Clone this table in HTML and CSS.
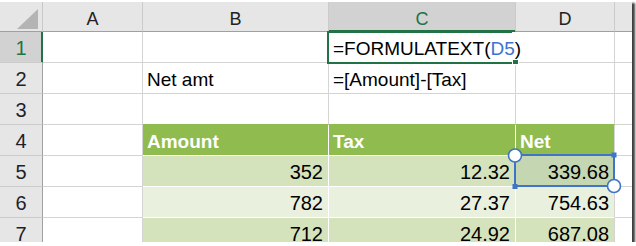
FILE: index.html
```html
<!DOCTYPE html>
<html>
<head>
<meta charset="utf-8">
<link rel="stylesheet" href="styles.css">
</head>
<body>
<div class="frame">
  <div class="sheet">
    <div class="c corner"><svg class="tri" width="24" height="22" viewBox="0 0 24 22"><polygon points="22,1 22,21 1,21" fill="#b4b4b4"/></svg></div>
    <div class="c colh">A</div>
    <div class="c colh">B</div>
    <div class="c colh sel">C</div>
    <div class="c colh">D</div>
    <div class="c colh last"></div>

    <div class="c rowh sel">1</div>
    <div class="c"></div>
    <div class="c"></div>
    <div class="c active"><span class="txt">=FORMULATEXT(<span class="ref">D5</span>)</span></div>
    <div class="c"></div>
    <div class="c last"></div>

    <div class="c rowh">2</div>
    <div class="c"></div>
    <div class="c">Net amt</div>
    <div class="c">=[Amount]-[Tax]</div>
    <div class="c"></div>
    <div class="c last"></div>

    <div class="c rowh">3</div>
    <div class="c"></div>
    <div class="c pre"></div>
    <div class="c pre"></div>
    <div class="c pre"></div>
    <div class="c last"></div>

    <div class="c rowh">4</div>
    <div class="c"></div>
    <div class="c th">Amount</div>
    <div class="c th">Tax</div>
    <div class="c th end">Net</div>
    <div class="c last"></div>

    <div class="c rowh">5</div>
    <div class="c"></div>
    <div class="c num b1">352</div>
    <div class="c num b1">12.32</div>
    <div class="c num b1 end picked">339.68<svg class="handles" width="120" height="52" viewBox="0 0 120 52"><rect x="9" y="9" width="99" height="31" fill="none" stroke="#3f74c6" stroke-width="2"/><rect x="105.5" y="6.5" width="5" height="5" fill="#3f74c6"/><rect x="6.5" y="38" width="5" height="5" fill="#3f74c6"/><circle cx="9" cy="9.5" r="6.5" fill="#fff" stroke="#3f74c6" stroke-width="1.6"/><circle cx="108" cy="40" r="6.5" fill="#fff" stroke="#3f74c6" stroke-width="1.6"/></svg></div>
    <div class="c last"></div>

    <div class="c rowh">6</div>
    <div class="c"></div>
    <div class="c num b2">782</div>
    <div class="c num b2">27.37</div>
    <div class="c num b2 end">754.63</div>
    <div class="c last"></div>

    <div class="c rowh">7</div>
    <div class="c"></div>
    <div class="c num b1">712</div>
    <div class="c num b1">24.92</div>
    <div class="c num b1 end">687.08</div>
    <div class="c last"></div>
  </div>
</div>
</body>
</html>
```
FILE: styles.css
```css
body {
  margin: 0;
  background: #fff;
  font-family: "Liberation Sans", Arial, sans-serif;
}

.frame {
  width: 632px;
  height: 242px;
  box-sizing: border-box;
  padding-top: 2px;
  overflow: hidden;
  background: #fff;
  box-shadow: 3px 3px 2px rgba(0, 0, 0, 0.75);
}

.sheet {
  display: grid;
  grid-template-columns: 43px 100px 186px 187px 99px 17px;
  grid-template-rows: 30px repeat(7, 31px);
}

.c {
  box-sizing: border-box;
  display: flex;
  align-items: flex-end;
  padding: 0 5px 4px 4px;
  border-right: 1px solid #d4d4d4;
  border-bottom: 1px solid #d4d4d4;
  font-size: 19px;
  line-height: 19px;
  white-space: nowrap;
  color: #000;
}

.c.last {
  border-right: none;
}

.corner {
  background: #e6e6e6;
  border-bottom-color: #a0a0a0;
  border-right-color: #c8c8c8;
  padding: 0;
  position: relative;
}

.tri {
  position: absolute;
  right: 2px;
  bottom: 1px;
}

.colh {
  background: #e6e6e6;
  justify-content: center;
  font-size: 18px;
  line-height: 18px;
  padding: 0 0 3px 0;
  color: #222;
  border-bottom-color: #a0a0a0;
  border-right-color: #cbcbcb;
}

.colh.sel {
  background: #d2d2d2;
  color: #217346;
  border-bottom-color: #217346;
  box-shadow: inset 0 -1px 0 #217346;
}

.rowh {
  background: #e6e6e6;
  justify-content: center;
  padding: 0 0 4px 0;
  font-size: 20px;
  line-height: 20px;
  color: #1f1f2a;
  border-right-color: #a0a0a0;
  border-bottom-color: #cbcbcb;
}

.rowh.sel {
  background: #d2d2d2;
  color: #217346;
  border-right-color: #217346;
  box-shadow: inset -1px 0 0 #217346;
}

.active {
  position: relative;
  border-right-color: transparent;
}

.active::after {
  content: "";
  position: absolute;
  left: -2px;
  top: -1px;
  right: 3px;
  bottom: -2px;
  border: 2px solid #217346;
  border-right: none;
}

.active::before {
  content: "";
  position: absolute;
  right: -3px;
  bottom: -2px;
  width: 5px;
  height: 4px;
  background: #217346;
  box-shadow: 0 0 0 1px #fff;
  z-index: 2;
}

.txt {
  position: relative;
  z-index: 1;
}

.ref {
  color: #3a74d0;
}

.pre {
  border-bottom-color: #8fbb4f;
}

.th {
  background: #8fbb4f;
  color: #fff;
  font-weight: bold;
  border-right-color: #fff;
  border-bottom-color: #fff;
}

.num {
  justify-content: flex-end;
  font-size: 20px;
  line-height: 20px;
  border-right-color: #fff;
  border-bottom-color: #fff;
}

.b1 {
  background: #d5e3bd;
}

.b2 {
  background: #e9f0de;
}

.end {
  border-right-color: #d4d4d4;
}

.picked {
  position: relative;
  background: #c4d6b2;
}

.handles {
  position: absolute;
  left: -10px;
  top: -10px;
  overflow: visible;
  z-index: 3;
}
```
